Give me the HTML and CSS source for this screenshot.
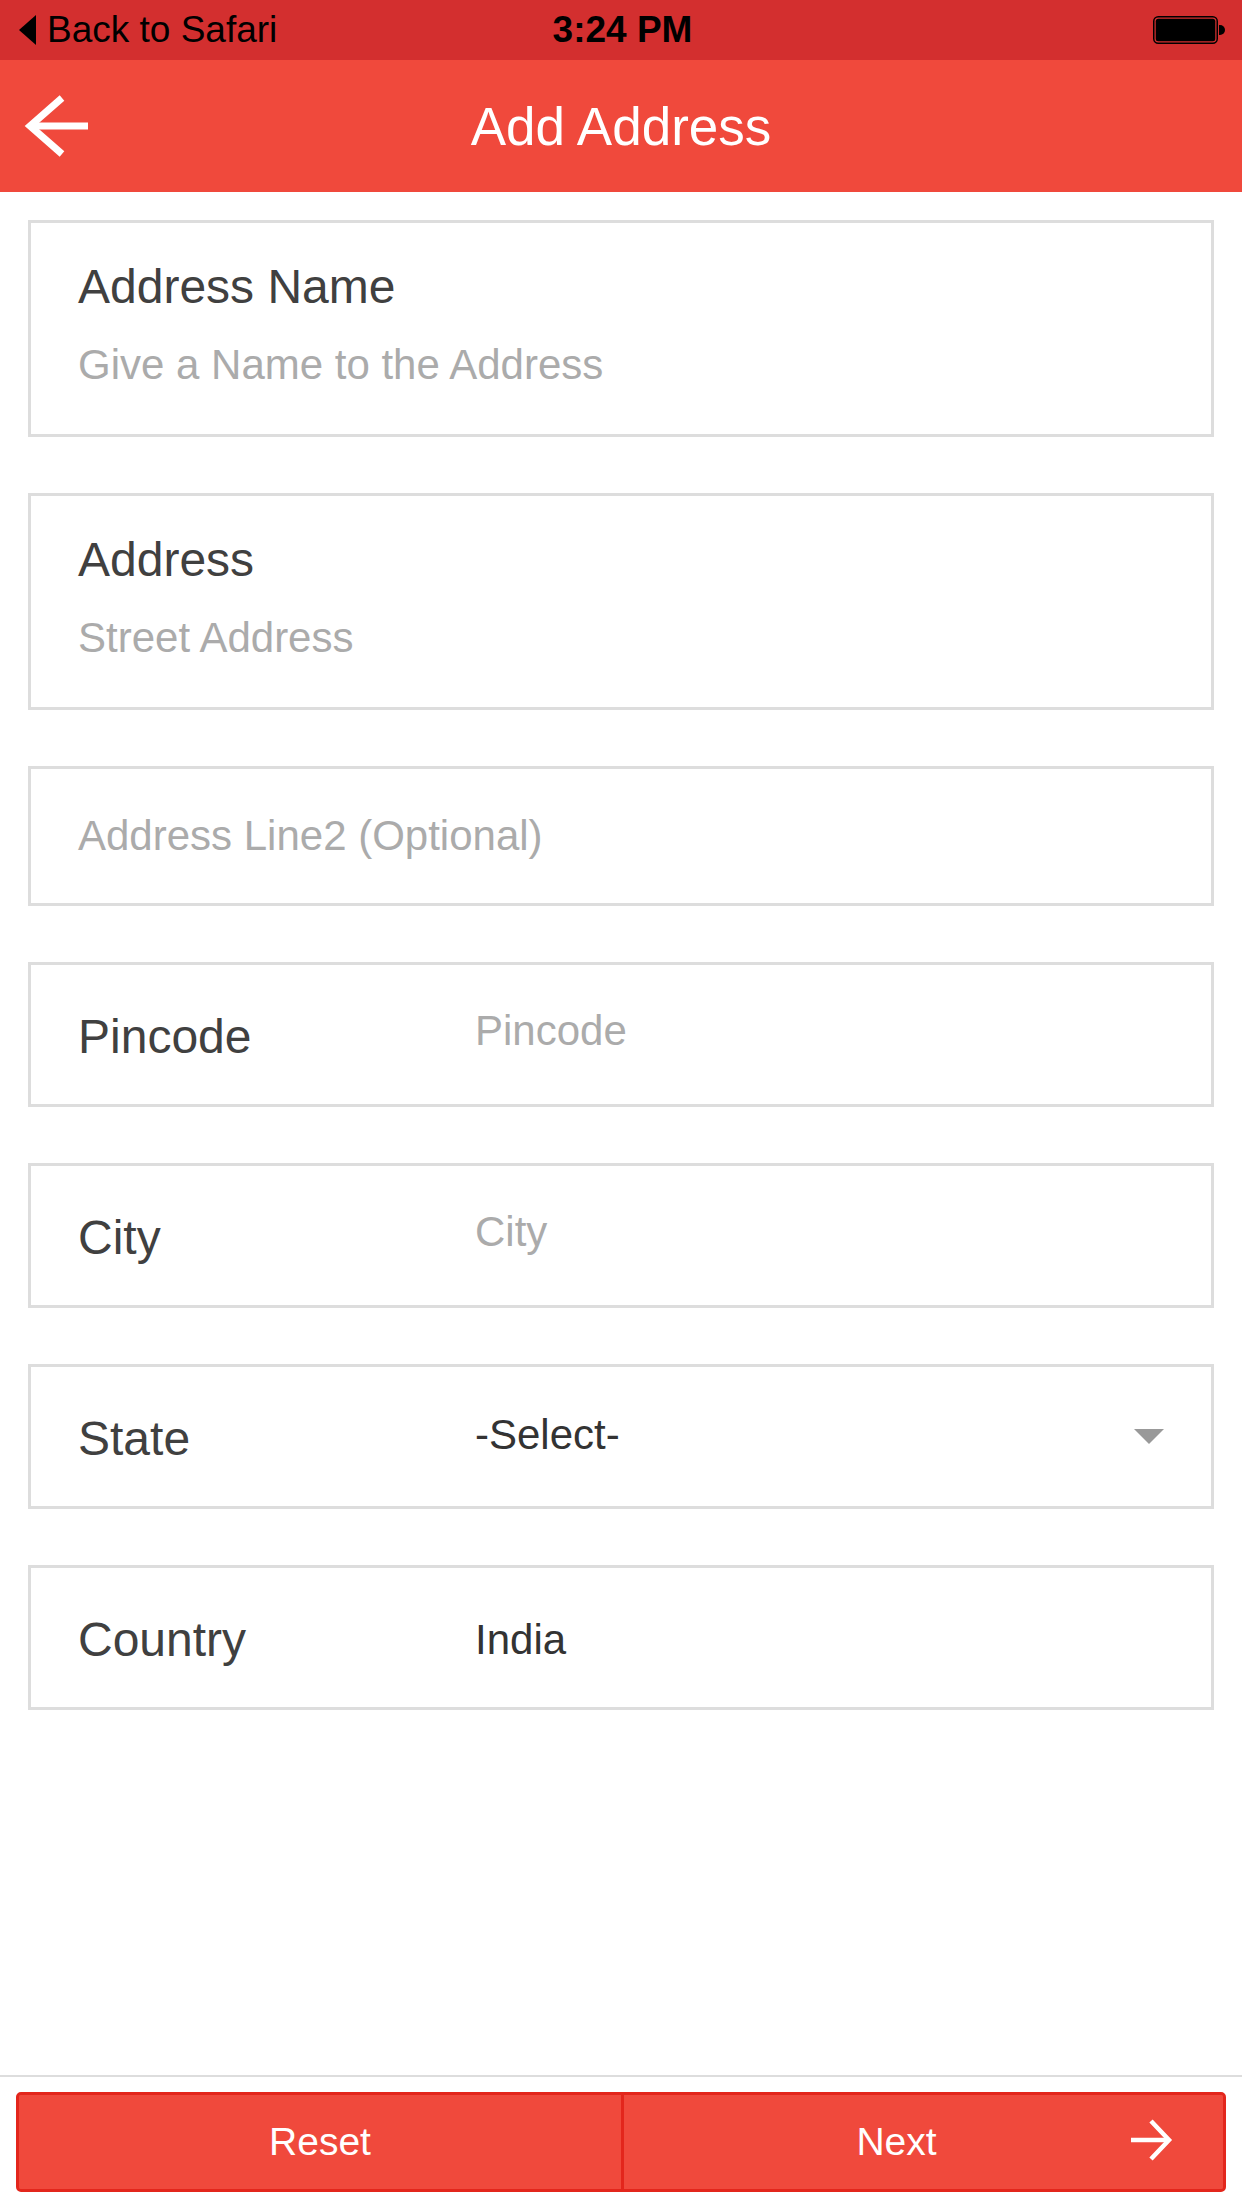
FILE: index.html
```html
<!DOCTYPE html>
<html lang="en">
<head>
<meta charset="utf-8">
<title>Add Address</title>
<link rel="stylesheet" href="styles.css">
</head>
<body>
  <div class="statusbar">
    <div class="sb-left">
      <svg class="sb-back" viewBox="0 0 17 30"><polygon points="17,0 0,15 17,30" fill="#000"/></svg>
      <span>Back to Safari</span>
    </div>
    <div class="sb-time">3:24 PM</div>
    <div class="sb-right">
      <svg class="battery" viewBox="0 0 73 30">
        <rect x="0.75" y="1.75" width="63.5" height="26.5" rx="4.5" fill="none" stroke="#000" stroke-width="1.5"/>
        <rect x="2.75" y="3.75" width="59.5" height="22.5" rx="2.5" fill="#000"/>
        <path d="M66 10h1a5 5 0 0 1 0 10h-1z" fill="#000"/>
      </svg>
    </div>
  </div>

  <header class="appbar">
    <div class="appbar-left">
      <svg class="appbar-back" viewBox="0 0 70 70">
        <line x1="10" y1="35" x2="68" y2="35" stroke="#fff" stroke-width="7"/>
        <polyline points="42,7 10,35 42,63" fill="none" stroke="#fff" stroke-width="7" stroke-linejoin="miter"/>
      </svg>
    </div>
    <h1 class="appbar-title">Add Address</h1>
    <div class="appbar-right"></div>
  </header>

  <main class="form">
    <div class="field field--stack">
      <div class="field-label">Address Name</div>
      <div class="field-hint">Give a Name to the Address</div>
    </div>
    <div class="field field--stack">
      <div class="field-label">Address</div>
      <div class="field-hint">Street Address</div>
    </div>
    <div class="field field--single">
      <div class="single-hint">Address Line2 (Optional)</div>
    </div>
    <div class="field field--row">
      <div class="row-label">Pincode</div>
      <div class="row-value row-value--placeholder">Pincode</div>
    </div>
    <div class="field field--row">
      <div class="row-label">City</div>
      <div class="row-value row-value--placeholder">City</div>
    </div>
    <div class="field field--row">
      <div class="row-label">State</div>
      <div class="row-value row-value--select">-Select-</div>
      <svg class="caret" viewBox="0 0 30 15"><polygon points="0,0 30,0 15,15" fill="#999"/></svg>
    </div>
    <div class="field field--row">
      <div class="row-label">Country</div>
      <div class="row-value row-value--filled">India</div>
    </div>
  </main>

  <footer class="footer">
    <div class="actions">
      <button class="btn">Reset</button>
      <button class="btn btn--next">Next
        <svg class="btn-arrow" viewBox="0 0 44 44">
          <line x1="2" y1="22" x2="40" y2="22" stroke="#fff" stroke-width="4.5"/>
          <polyline points="22,3 40,22 22,41" fill="none" stroke="#fff" stroke-width="4.5" stroke-linejoin="miter"/>
        </svg>
      </button>
    </div>
  </footer>
</body>
</html>
```

FILE: styles.css
```css
html, body {
  margin: 0;
  padding: 0;
}

body {
  width: 1242px;
  height: 2208px;
  display: flex;
  flex-direction: column;
  font-family: "Liberation Sans", Arial, sans-serif;
  background: #ffffff;
  overflow: hidden;
}

/* Status bar */
.statusbar {
  height: 60px;
  flex: none;
  background: #d32f2f;
  display: grid;
  grid-template-columns: 1fr auto 1fr;
  align-items: center;
  padding: 0 16px 0 19px;
  color: #000;
}

.sb-left {
  display: flex;
  align-items: center;
  gap: 11px;
  font-size: 37px;
  line-height: 60px;
}

.sb-back {
  width: 17px;
  height: 30px;
  display: block;
}

.sb-time {
  font-size: 37px;
  font-weight: bold;
  line-height: 60px;
}

.sb-right {
  justify-self: end;
  display: flex;
}

.battery {
  width: 73px;
  height: 30px;
  display: block;
}

/* App bar */
.appbar {
  height: 132px;
  flex: none;
  background: #f0493c;
  display: grid;
  grid-template-columns: 1fr auto 1fr;
  align-items: center;
  padding: 0 20px;
}

.appbar-back {
  width: 70px;
  height: 70px;
  display: block;
}

.appbar-title {
  margin: 0;
  font-size: 53px;
  font-weight: normal;
  color: #ffffff;
  line-height: 1;
}

/* Form */
.form {
  display: flex;
  flex-direction: column;
  gap: 56px;
  padding: 28px 28px 0;
}

.field {
  border: 3px solid #dddddd;
  box-sizing: border-box;
}

.field--stack {
  padding: 36px 47px 44px;
}

.field-label {
  font-size: 48px;
  line-height: 56px;
  color: #404040;
}

.field-hint {
  margin-top: 25px;
  font-size: 42px;
  line-height: 50px;
  color: #ababab;
}

.field--single {
  height: 140px;
  display: flex;
  align-items: center;
  padding: 0 47px;
}

.single-hint {
  font-size: 42px;
  line-height: 50px;
  color: #ababab;
}

.field--row {
  height: 145px;
  display: flex;
  align-items: center;
  padding: 0 47px;
}

.row-label {
  width: 397px;
  flex: none;
  font-size: 48px;
  line-height: 56px;
  color: #404040;
  padding-top: 5px;
}

.row-value {
  flex: 1;
  font-size: 42px;
  line-height: 50px;
  color: #333333;
}

.row-value--placeholder {
  color: #ababab;
  padding-bottom: 7px;
}

.row-value--select {
  padding-bottom: 4px;
}

.row-value--filled {
  padding-top: 5px;
}

.caret {
  width: 30px;
  height: 15px;
  flex: none;
  display: block;
}

/* Footer */
.footer {
  margin-top: auto;
  flex: none;
  border-top: 2px solid #dddddd;
  padding: 15px 16px 16px;
}

.actions {
  display: grid;
  grid-template-columns: 1fr 1fr;
  height: 100px;
  box-sizing: border-box;
  border: 3px solid #e3261c;
  border-radius: 5px;
  overflow: hidden;
  background: #f0493c;
}

.btn {
  min-width: 0;
  box-sizing: border-box;
  position: relative;
  margin: 0;
  padding: 0;
  border: 0;
  background: #f0493c;
  color: #ffffff;
  font-family: inherit;
  font-size: 39px;
  display: flex;
  align-items: center;
  justify-content: center;
}

.btn + .btn {
  border-left: 3px solid #e3261c;
}

.btn--next {
  padding-right: 54px;
}

.btn-arrow {
  position: absolute;
  right: 50px;
  top: 50%;
  margin-top: -24px;
  width: 44px;
  height: 44px;
}
```
